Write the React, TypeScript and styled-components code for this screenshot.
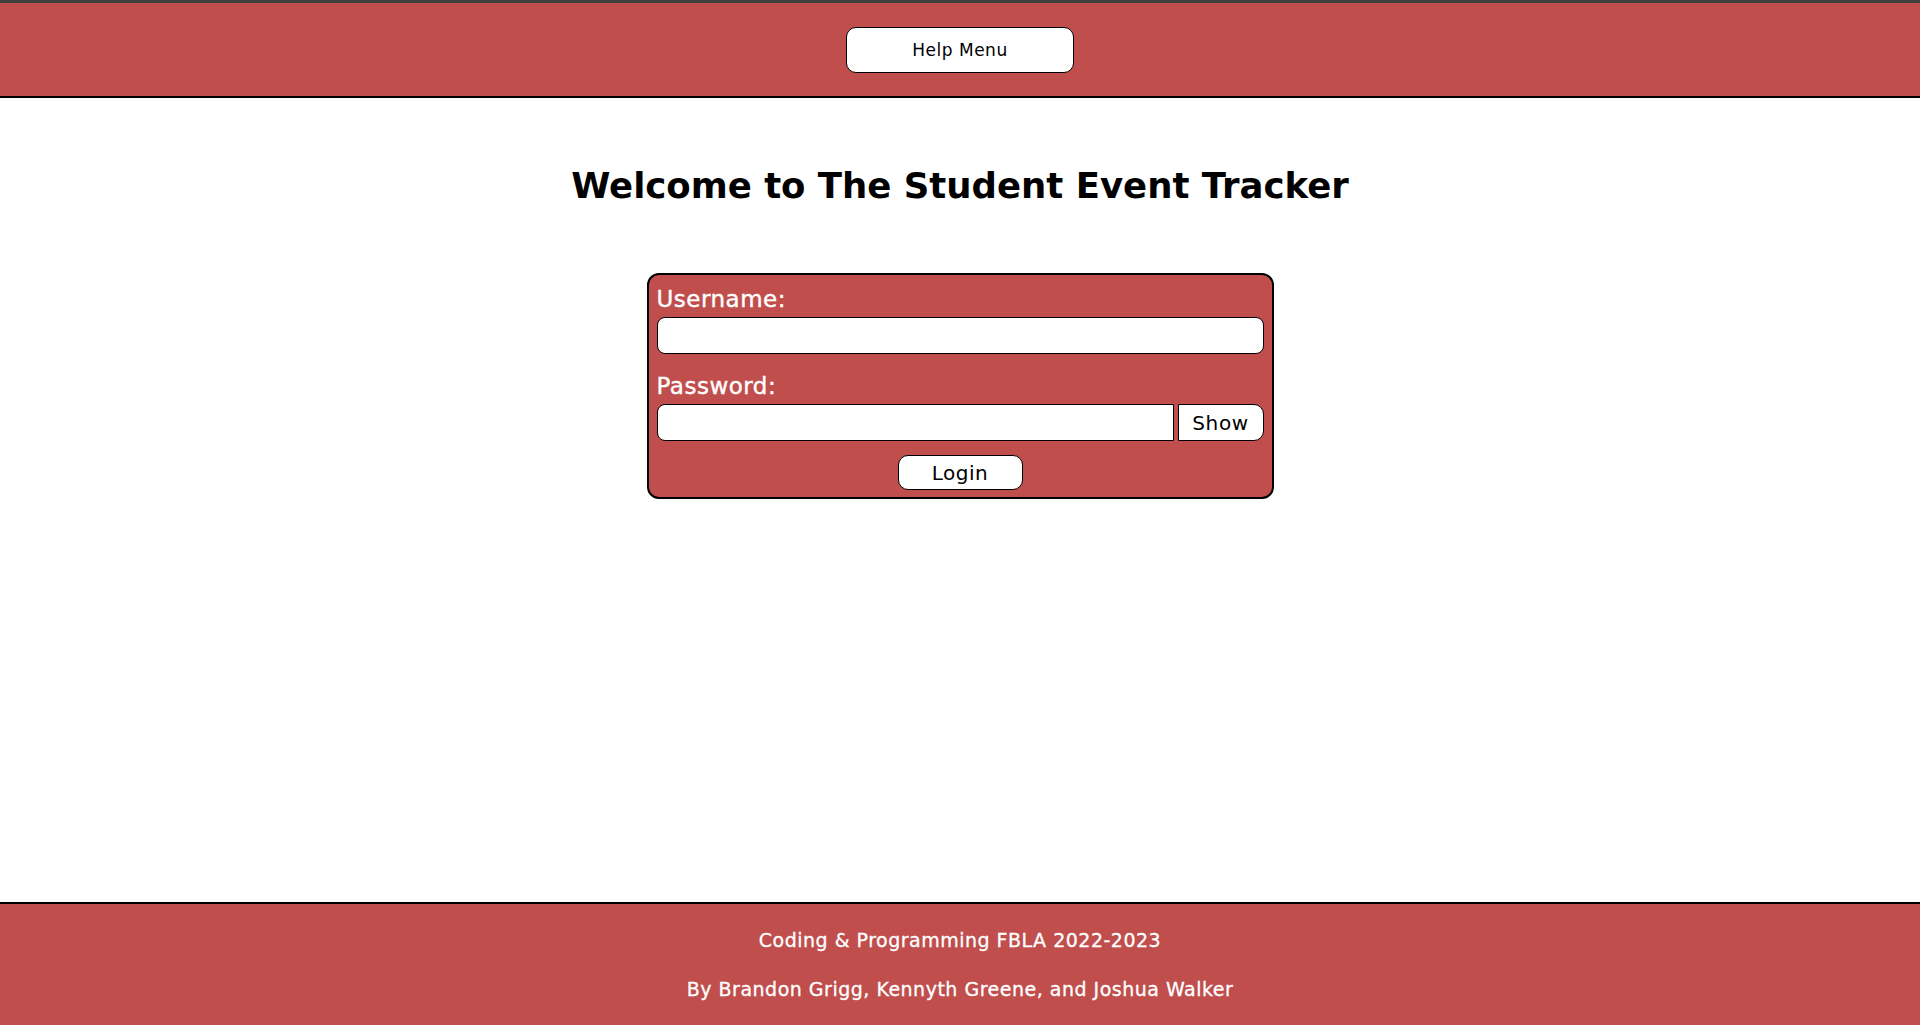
import React, { useState } from "react";
import styled, { createGlobalStyle } from "styled-components";

const RED = "#c04e4d";

const GlobalStyle = createGlobalStyle`
  html, body {
    margin: 0;
    padding: 0;
    background: #ffffff;
  }
  body {
    font-family: "DejaVu Sans", "Liberation Sans", sans-serif;
  }
  * { box-sizing: border-box; }
`;

const Page = styled.div`
  min-height: 100vh;
  display: flex;
  flex-direction: column;
`;

const Header = styled.header`
  height: 98px;
  background: ${RED};
  border-top: 3px solid #3f3f3f;
  border-bottom: 2px solid #000;
  display: flex;
  align-items: center;
  justify-content: center;
`;

const HelpButton = styled.button`
  width: 228px;
  height: 46px;
  background: #fff;
  border: 1px solid #000;
  border-radius: 10px;
  font-family: "DejaVu Sans", sans-serif;
  font-size: 17px;
  letter-spacing: 0.5px;
  color: #000;
  cursor: pointer;
  padding: 0;
`;

const Main = styled.main`
  flex: 1;
  display: flex;
  flex-direction: column;
  align-items: center;
`;

const Title = styled.h1`
  margin: 67px 0 0;
  font-family: "DejaVu Sans", sans-serif;
  font-weight: bold;
  font-size: 35.5px;
  line-height: 41px;
  color: #000;
`;

const Card = styled.form`
  margin-top: 67px;
  width: 627px;
  background: ${RED};
  border: 2px solid #000;
  border-radius: 12px;
  padding: 8px 8px 7px;
  display: flex;
  flex-direction: column;
`;

const Label = styled.label<{ $gap?: number }>`
  display: block;
  margin-top: ${(p) => p.$gap ?? 0}px;
  height: 34px;
  line-height: 33px;
  font-family: "DejaVu Sans", sans-serif;
  font-size: 23px;
  letter-spacing: 0.5px;
  color: #fff;
  -webkit-text-stroke: 0.4px #fff;
`;

const Row = styled.div`
  display: flex;
  gap: 4px;
`;

const TextInput = styled.input<{ $joined?: boolean }>`
  flex: 1;
  min-width: 0;
  height: 37px;
  border: 1px solid #000;
  border-radius: ${(p) => (p.$joined ? "8px 0 0 8px" : "8px")};
  background: #fff;
  font-size: 18px;
  padding: 0 8px;
  outline: none;
`;

const ShowButton = styled.button`
  width: 86px;
  height: 37px;
  background: #fff;
  border: 1px solid #000;
  border-radius: 0 10px 10px 0;
  font-family: "DejaVu Sans", sans-serif;
  font-size: 20px;
  letter-spacing: 0.6px;
  color: #000;
  padding: 0;
  cursor: pointer;
`;

const LoginButton = styled.button`
  align-self: center;
  margin-top: 14px;
  width: 125px;
  height: 35px;
  background: #fff;
  border: 1px solid #000;
  border-radius: 10px;
  font-family: "DejaVu Sans", sans-serif;
  font-size: 20px;
  letter-spacing: 0.5px;
  color: #000;
  padding: 0;
  cursor: pointer;
`;

const Footer = styled.footer`
  height: 123px;
  background: ${RED};
  border-top: 2px solid #000;
  display: flex;
  flex-direction: column;
  align-items: center;
  padding-top: 24px;
  gap: 25px;
`;

const FooterLine = styled.p`
  margin: 0;
  line-height: 24px;
  font-family: "DejaVu Sans", sans-serif;
  font-size: 19px;
  letter-spacing: 0.5px;
  color: #fff;
  -webkit-text-stroke: 0.3px #fff;
`;

export default function App() {
  const [show, setShow] = useState(false);
  return (
    <Page>
      <GlobalStyle />
      <Header>
        <HelpButton type="button">Help Menu</HelpButton>
      </Header>
      <Main>
        <Title>Welcome to The Student Event Tracker</Title>
        <Card onSubmit={(e) => e.preventDefault()}>
          <Label htmlFor="username">Username:</Label>
          <Row>
            <TextInput id="username" type="text" />
          </Row>
          <Label htmlFor="password" $gap={16}>
            Password:
          </Label>
          <Row>
            <TextInput id="password" type={show ? "text" : "password"} $joined />
            <ShowButton type="button" onClick={() => setShow((s) => !s)}>
              {show ? "Hide" : "Show"}
            </ShowButton>
          </Row>
          <LoginButton type="submit">Login</LoginButton>
        </Card>
      </Main>
      <Footer>
        <FooterLine>Coding &amp; Programming FBLA 2022-2023</FooterLine>
        <FooterLine>By Brandon Grigg, Kennyth Greene, and Joshua Walker</FooterLine>
      </Footer>
    </Page>
  );
}
